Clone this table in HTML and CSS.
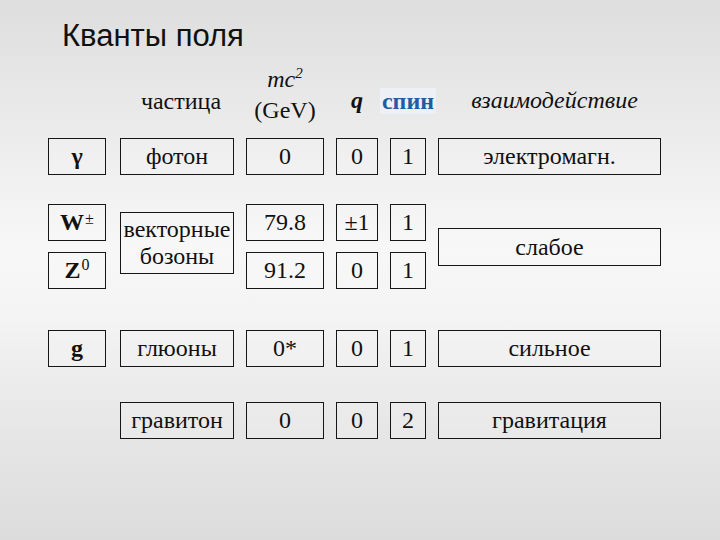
FILE: index.html
```html
<!DOCTYPE html>
<html lang="ru">
<head>
<meta charset="utf-8">
<title>Кванты поля</title>
<link rel="stylesheet" href="styles.css">
</head>
<body>
<div class="slide">
  <h1 class="title">Кванты поля</h1>
  <div class="table">
    <div class="head c2 h-single">частица</div>
    <div class="head c3 h-mass"><span class="it">mc<sup>2</sup></span><br>(GeV)</div>
    <div class="head c4 h-q">q</div>
    <div class="head c5 h-spin"><span class="spin">спин</span></div>
    <div class="head c6 h-int">взаимодействие</div>

    <div class="box c1 r1 sym"><span>γ</span></div>
    <div class="box c2 r1">фотон</div>
    <div class="box c3 r1">0</div>
    <div class="box c4 r1">0</div>
    <div class="box c5 r1">1</div>
    <div class="box c6 r1">электромагн.</div>

    <div class="box c1 r2 sym"><span>W<sup class="pm">±</sup></span></div>
    <div class="box c2 rv vec"><span>векторные<br>бозоны</span></div>
    <div class="box c3 r2">79.8</div>
    <div class="box c4 r2">±1</div>
    <div class="box c5 r2">1</div>
    <div class="box c6 rv weak">слабое</div>

    <div class="box c1 r3 sym"><span>Z<sup>0</sup></span></div>
    <div class="box c3 r3">91.2</div>
    <div class="box c4 r3">0</div>
    <div class="box c5 r3">1</div>

    <div class="box c1 r4 sym"><span>g</span></div>
    <div class="box c2 r4">глюоны</div>
    <div class="box c3 r4">0*</div>
    <div class="box c4 r4">0</div>
    <div class="box c5 r4">1</div>
    <div class="box c6 r4">сильное</div>

    <div class="box c2 r5">гравитон</div>
    <div class="box c3 r5">0</div>
    <div class="box c4 r5">0</div>
    <div class="box c5 r5">2</div>
    <div class="box c6 r5">гравитация</div>
  </div>
</div>
</body>
</html>
```
FILE: styles.css
```css
html, body {
  margin: 0;
  padding: 0;
}
body {
  width: 720px;
  height: 540px;
  overflow: hidden;
  background: linear-gradient(to bottom, #dedede 0%, #e9e9e9 20%, #f7f7f7 46%, #f4f4f4 58%, #e6e6e6 80%, #dcdcdc 100%);
  font-family: "Liberation Serif", "Times New Roman", serif;
  color: #111;
}
.slide {
  width: 720px;
  height: 540px;
}
.title {
  margin: 18px 0 0 62px;
  font-family: "Liberation Sans", Arial, sans-serif;
  font-weight: normal;
  font-size: 31px;
  line-height: 36px;
  color: #111;
}
.table {
  display: grid;
  padding-left: 48px;
  grid-template-columns: 60px 114px 78px 42px 36px 223px;
  column-gap: 12px;
  grid-template-rows: 72px 12px 37px 29px 37px 11px 37px 41px 37px 35px 37px;
  font-size: 24px;
}
.c1 { grid-column: 1; width: 58px; }
.c2 { grid-column: 2; }
.c3 { grid-column: 3; }
.c4 { grid-column: 4; }
.c5 { grid-column: 5; }
.c6 { grid-column: 6; }
.r1 { grid-row: 3; }
.r2 { grid-row: 5; }
.r3 { grid-row: 7; }
.r4 { grid-row: 9; }
.r5 { grid-row: 11; }
.rv { grid-row: 5 / 8; align-self: start; }

.head {
  grid-row: 1;
  align-self: end;
  text-align: center;
  line-height: 26px;
}
.h-single { margin-bottom: 12px; margin-left: 8px; }
.h-mass { line-height: 31px; margin-bottom: 0; }
.h-q { margin-bottom: 13px; font-weight: bold; font-style: italic; }
.h-int { margin-bottom: 13px; font-style: italic; margin-left: 10px; }
.h-spin { margin-bottom: 12px; margin-left: -12px; margin-right: -12px; }
.it { font-style: italic; }
.h-mass sup { font-size: 15px; vertical-align: 9px; line-height: 0; }
.spin {
  color: #1f5d9e;
  font-weight: bold;
  background: #edf1f5;
  padding: 0 2px;
}

.box {
  box-sizing: border-box;
  border: 1px solid #161616;
  background: rgba(255, 255, 255, 0.12);
  display: flex;
  align-items: center;
  justify-content: center;
  text-align: center;
  line-height: normal;
}
.sym { font-weight: bold; }
.sym sup { font-size: 16px; font-weight: normal; line-height: 0; vertical-align: 8px; margin-left: 1px; }
.sym sup.pm { font-size: 16px; vertical-align: 6px; }
.vec {
  height: 62px;
  margin-top: 8px;
  line-height: 27px;
}
.weak {
  height: 38px;
  margin-top: 24px;
}
```
